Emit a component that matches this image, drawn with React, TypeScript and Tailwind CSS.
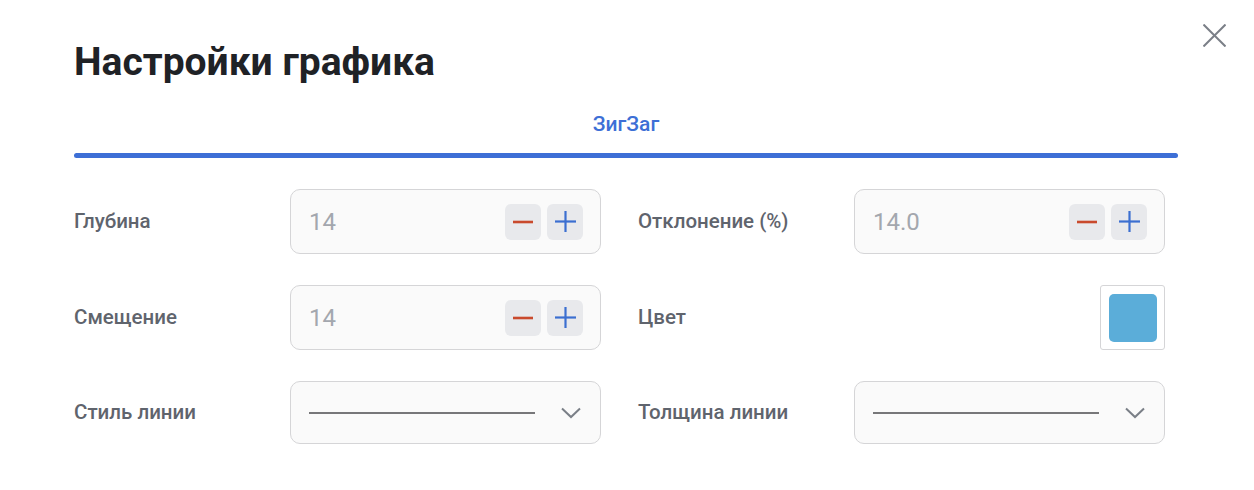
type Field =
  | { kind: 'number'; label: string; value: string }
  | { kind: 'color'; label: string; color: string }
  | { kind: 'line'; label: string };

const fields: Field[] = [
  { kind: 'number', label: 'Глубина', value: '14' },
  { kind: 'number', label: 'Отклонение (%)', value: '14.0' },
  { kind: 'number', label: 'Смещение', value: '14' },
  { kind: 'color', label: 'Цвет', color: '#5badd9' },
  { kind: 'line', label: 'Стиль линии' },
  { kind: 'line', label: 'Толщина линии' },
];

function NumberInput({ value }: { value: string }) {
  return (
    <div className="flex h-[65px] w-[311px] items-center justify-between rounded-[10px] border border-[#d5d5d7] bg-[#fafafa] pl-[18px] pr-[17px]">
      <span className="text-[24px] text-[#a3a7ae]">{value}</span>
      <div className="flex gap-[6px]">
        <button className="flex h-[36px] w-[36px] items-center justify-center rounded-[6px] bg-[#e8e9ec]">
          <svg width="20" height="20" viewBox="0 0 20 20">
            <line x1="0" y1="10" x2="20" y2="10" stroke="#c94a2d" strokeWidth="2.6" />
          </svg>
        </button>
        <button className="flex h-[36px] w-[36px] items-center justify-center rounded-[6px] bg-[#e8e9ec]">
          <svg width="21" height="21" viewBox="0 0 21 21">
            <line x1="0" y1="10.5" x2="21" y2="10.5" stroke="#3b6fd1" strokeWidth="2.2" />
            <line x1="10.5" y1="0" x2="10.5" y2="21" stroke="#3b6fd1" strokeWidth="2.2" />
          </svg>
        </button>
      </div>
    </div>
  );
}

function LineSelect() {
  return (
    <div className="flex h-[63px] w-[311px] items-center rounded-[10px] border border-[#d5d5d7] bg-[#fafafa] pl-[18px] pr-[19px]">
      <div className="h-[2px] w-[226px] bg-[#777779]" />
      <svg width="20" height="12" viewBox="0 0 20 12" className="ml-auto">
        <polyline points="1,1.5 10,10 19,1.5" fill="none" stroke="#7a7f87" strokeWidth="2" />
      </svg>
    </div>
  );
}

function ColorBox({ color }: { color: string }) {
  return (
    <div className="ml-auto flex h-[65px] w-[65px] items-center justify-center rounded-[3px] border border-[#d5d5d7] bg-white">
      <div className="h-[48px] w-[48px] rounded-[5px]" style={{ backgroundColor: color }} />
    </div>
  );
}

export default function App() {
  return (
    <div className="relative h-[490px] w-full bg-white pl-[74px] pr-[76px] pt-[39px] font-['Roboto',sans-serif]">
      {/* close */}
      <button className="absolute left-[1203px] top-[24px]">
        <svg width="23" height="23" viewBox="0 0 23 23">
          <line x1="0.5" y1="0.5" x2="22.5" y2="22.5" stroke="#7a7f87" strokeWidth="2" />
          <line x1="22.5" y1="0.5" x2="0.5" y2="22.5" stroke="#7a7f87" strokeWidth="2" />
        </svg>
      </button>

      <h1 className="text-[39px] font-bold leading-[46px] text-[#1f2226]">Настройки графика</h1>

      {/* tabs */}
      <div className="mt-[25px] flex justify-center">
        <span className="text-[21px] font-medium leading-[28px] text-[#3d6fd6]">ЗигЗаг</span>
      </div>
      <div className="mt-[15px] h-[5px] w-full rounded-full bg-[#3d6fd6]" />

      <div className="mt-[31px] grid grid-cols-[527px_527px] gap-x-[37px] gap-y-[31px]">
        {fields.map((f) => (
          <div key={f.label} className="flex items-center">
            <span className="w-[216px] shrink-0 text-[20.5px] font-medium text-[#5f646d]">{f.label}</span>
            {f.kind === 'number' && <NumberInput value={f.value} />}
            {f.kind === 'color' && <ColorBox color={f.color} />}
            {f.kind === 'line' && <LineSelect />}
          </div>
        ))}
      </div>
    </div>
  );
}
